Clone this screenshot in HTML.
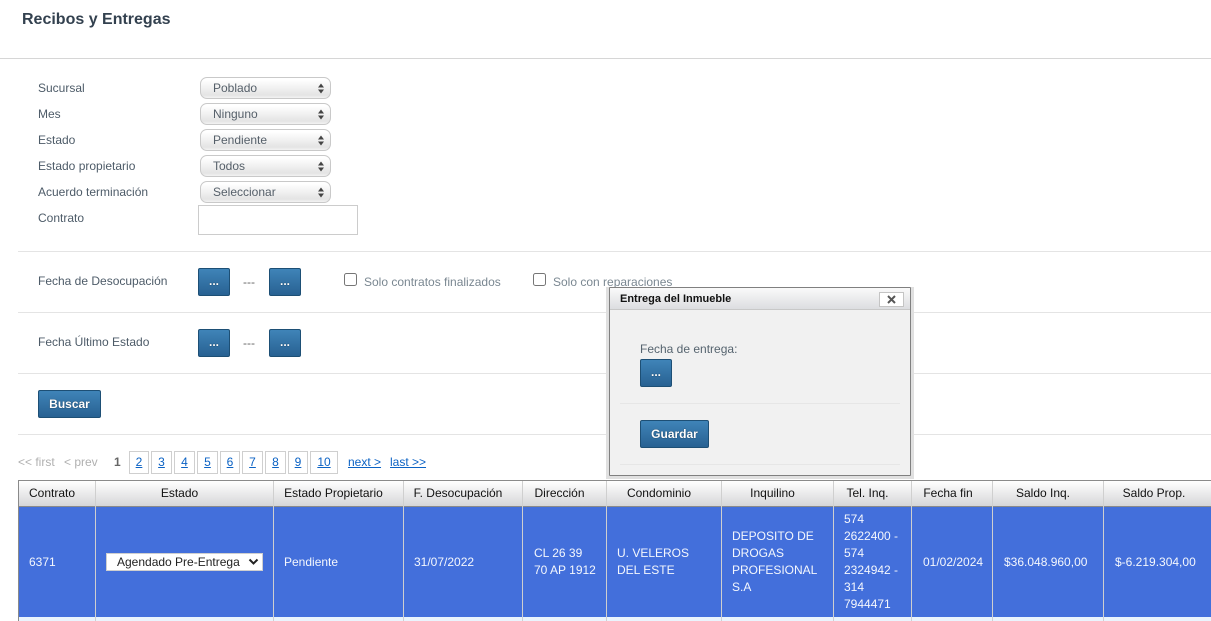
<!DOCTYPE html>
<html lang="es"><head><meta charset="utf-8"><title>Recibos y Entregas</title>
<style>
html,body{margin:0;padding:0;background:#fff;}
body{width:1211px;height:621px;overflow:hidden;position:relative;font:12px/17px "Liberation Sans",Arial,sans-serif;color:#4d5b68;}
.a{position:absolute;white-space:nowrap;}
.hr{position:absolute;height:1px;background:#e4e4e4;right:0;left:18px;}
.lbl{position:absolute;left:38px;line-height:16px;white-space:nowrap;color:#4d5b68;}
.sel{position:absolute;left:200px;width:129px;height:20px;border:1px solid #c9c9c9;border-radius:7px;background:linear-gradient(#ffffff 10%,#e4e4e4 85%,#f2f2f2);line-height:21px;text-indent:12px;color:#555f69;}
.sel svg{position:absolute;right:5px;top:5px;}
.btn{position:absolute;box-sizing:border-box;border:1px solid #1d4f75;border-radius:2px;background:linear-gradient(#3f84b8,#286192);color:#fff;font-weight:bold;text-align:center;text-shadow:0 0 1px #123;}
.dots{width:32px;height:28px;line-height:24px;font-size:12px;}
.dash{position:absolute;left:243px;color:#666;}
.cb{position:absolute;box-sizing:border-box;width:13px;height:13px;border:1px solid #767676;border-radius:2.5px;background:#fff;}
.pg{position:absolute;top:451px;height:23px;box-sizing:border-box;border:1px solid #cfcfcf;text-align:center;line-height:21px;color:#0b62c4;text-decoration:underline;}
.ln{position:absolute;top:454px;color:#0b62c4;text-decoration:underline;white-space:nowrap;line-height:17px;}
.gr{position:absolute;top:454px;color:#b0b0b0;white-space:nowrap;line-height:17px;}
.th{position:absolute;top:481px;height:25px;line-height:24px;color:#111;text-align:center;white-space:nowrap;}
.td{position:absolute;color:#f4f7fd;white-space:nowrap;line-height:17px;}
.v{position:absolute;top:481px;width:1px;height:140px;background:#cfcfcf;}
</style></head>
<body>
<div class="a" style="left:22px;top:10px;font-size:16px;line-height:19px;font-weight:bold;color:#33414f;">Recibos y Entregas</div>
<div class="hr" style="left:0;top:58px;background:#d6d6d6;"></div>

<div class="lbl" style="top:80px;">Sucursal</div>
<div class="lbl" style="top:106px;">Mes</div>
<div class="lbl" style="top:132px;">Estado</div>
<div class="lbl" style="top:158px;">Estado propietario</div>
<div class="lbl" style="top:184px;">Acuerdo terminación</div>
<div class="lbl" style="top:210px;">Contrato</div>

<div class="sel" style="top:77px;">Poblado<svg width="8" height="11" viewBox="0 0 8 11"><path d="M4 0.5L7 4.5H1ZM1 6.5H7L4 10.5Z" fill="#444"/></svg></div>
<div class="sel" style="top:103px;">Ninguno<svg width="8" height="11" viewBox="0 0 8 11"><path d="M4 0.5L7 4.5H1ZM1 6.5H7L4 10.5Z" fill="#444"/></svg></div>
<div class="sel" style="top:129px;">Pendiente<svg width="8" height="11" viewBox="0 0 8 11"><path d="M4 0.5L7 4.5H1ZM1 6.5H7L4 10.5Z" fill="#444"/></svg></div>
<div class="sel" style="top:155px;">Todos<svg width="8" height="11" viewBox="0 0 8 11"><path d="M4 0.5L7 4.5H1ZM1 6.5H7L4 10.5Z" fill="#444"/></svg></div>
<div class="sel" style="top:181px;">Seleccionar<svg width="8" height="11" viewBox="0 0 8 11"><path d="M4 0.5L7 4.5H1ZM1 6.5H7L4 10.5Z" fill="#444"/></svg></div>
<div class="a" style="left:198px;top:205px;width:158px;height:28px;border:1px solid #cccccc;background:#fff;"></div>

<div class="hr" style="top:251px;"></div>
<div class="lbl" style="top:273px;">Fecha de Desocupación</div>
<div class="btn dots" style="left:198px;top:268px;">...</div>
<div class="dash" style="top:274px;">---</div>
<div class="btn dots" style="left:269px;top:268px;">...</div>
<div class="cb" style="left:344px;top:273px;"></div>
<div class="a" style="left:364px;top:274px;color:#7a8791;">Solo contratos finalizados</div>
<div class="cb" style="left:533px;top:273px;"></div>
<div class="a" style="left:553px;top:274px;color:#7a8791;">Solo con reparaciones</div>

<div class="hr" style="top:312px;"></div>
<div class="lbl" style="top:334px;">Fecha Último Estado</div>
<div class="btn dots" style="left:198px;top:329px;">...</div>
<div class="dash" style="top:335px;">---</div>
<div class="btn dots" style="left:269px;top:329px;">...</div>

<div class="hr" style="top:373px;"></div>
<div class="btn" style="left:38px;top:390px;width:63px;height:28px;line-height:26px;">Buscar</div>
<div class="hr" style="top:434px;"></div>

<div class="gr" style="left:18px;">&lt;&lt; first</div>
<div class="gr" style="left:64px;">&lt; prev</div>
<div class="a" style="left:114px;top:454px;font-weight:bold;color:#666;">1</div>
<div class="pg" style="left:129px;width:20px;">2</div>
<div class="pg" style="left:151px;width:21px;">3</div>
<div class="pg" style="left:174px;width:21px;">4</div>
<div class="pg" style="left:197px;width:21px;">5</div>
<div class="pg" style="left:220px;width:20px;">6</div>
<div class="pg" style="left:242px;width:21px;">7</div>
<div class="pg" style="left:265px;width:21px;">8</div>
<div class="pg" style="left:288px;width:20px;">9</div>
<div class="pg" style="left:310px;width:28px;">10</div>
<div class="ln" style="left:348px;">next &gt;</div>
<div class="ln" style="left:390px;">last &gt;&gt;</div>

<!-- table -->
<div class="a" style="left:18px;top:480px;right:0;height:1px;background:#8a8a8a;"></div>
<div class="a" style="left:18px;top:480px;width:1px;height:141px;background:#8a8a8a;"></div>
<div class="a" style="left:19px;top:481px;right:0;height:25px;background:linear-gradient(#ffffff,#d6d6d8);"></div>
<div class="a" style="left:19px;top:506px;right:0;height:1px;background:#8a8a8a;"></div>
<div class="a" style="left:19px;top:507px;right:0;height:110px;background:#436fdb;"></div>
<div class="a" style="left:19px;top:617px;right:0;height:4px;background:#eaf4fd;"></div>

<div class="v" style="left:95px;"></div><div class="v" style="left:273px;"></div><div class="v" style="left:403px;"></div><div class="v" style="left:522px;"></div><div class="v" style="left:606px;"></div><div class="v" style="left:721px;"></div><div class="v" style="left:833px;"></div><div class="v" style="left:911px;"></div><div class="v" style="left:992px;"></div><div class="v" style="left:1103px;"></div>

<div class="th" style="left:19px;width:66px;">Contrato</div>
<div class="th" style="left:96px;width:167px;">Estado</div>
<div class="th" style="left:274px;width:119px;">Estado Propietario</div>
<div class="th" style="left:404px;width:108px;">F. Desocupación</div>
<div class="th" style="left:523px;width:73px;">Dirección</div>
<div class="th" style="left:607px;width:104px;">Condominio</div>
<div class="th" style="left:722px;width:101px;">Inquilino</div>
<div class="th" style="left:834px;width:67px;">Tel. Inq.</div>
<div class="th" style="left:913px;width:70px;">Fecha fin</div>
<div class="th" style="left:993px;width:100px;">Saldo Inq.</div>
<div class="th" style="left:1104px;width:100px;">Saldo Prop.</div>

<div class="td" style="left:29px;top:554px;">6371</div>
<div class="a" style="left:106px;top:553px;width:157px;height:18px;box-sizing:border-box;background:#fff;border:1px solid #cfcfcf;color:#222;line-height:17px;padding-left:10px;">Agendado Pre-Entrega<svg style="position:absolute;right:3px;top:4px;" width="11" height="8" viewBox="0 0 11 8"><path d="M1.5 1.5L5.5 5.5L9.5 1.5" fill="none" stroke="#222" stroke-width="2"/></svg></div>
<div class="td" style="left:284px;top:554px;">Pendiente</div>
<div class="td" style="left:414px;top:554px;">31/07/2022</div>
<div class="td" style="left:534px;top:545px;">CL 26 39<br>70 AP 1912</div>
<div class="td" style="left:617px;top:545px;">U. VELEROS<br>DEL ESTE</div>
<div class="td" style="left:732px;top:528px;">DEPOSITO DE<br>DROGAS<br>PROFESIONAL<br>S.A</div>
<div class="td" style="left:844px;top:511px;">574<br>2622400 -<br>574<br>2324942 -<br>314<br>7944471</div>
<div class="td" style="left:923px;top:554px;">01/02/2024</div>
<div class="td" style="left:1004px;top:554px;">$36.048.960,00</div>
<div class="td" style="left:1115px;top:554px;">$-6.219.304,00</div>

<!-- dialog -->
<div class="a" style="left:606px;top:287px;width:308px;height:192px;background:#e0e0e0;"></div>
<div class="a" style="left:609px;top:287px;width:300px;height:187px;border:1px solid #808080;background:#f1f1f1;border-radius:1px;">
  <div class="a" style="left:0;top:0;right:0;height:21px;background:linear-gradient(#fafafa,#dcdde0);border-bottom:1px solid #c8c8c8;"></div>
  <div class="a" style="left:10px;top:3px;font-size:11px;line-height:17px;font-weight:bold;color:#111;">Entrega del Inmueble</div>
  <div class="a" style="left:269px;top:4px;width:23px;height:13px;background:#fff;border:1px solid #c4c4c4;">
    <svg style="position:absolute;left:7px;top:2px;" width="9" height="9" viewBox="0 0 9 9"><path d="M1 1L8 8M8 1L1 8" stroke="#555" stroke-width="2"/></svg>
  </div>
  <div class="a" style="left:30px;top:53px;color:#56646f;">Fecha de entrega:</div>
  <div class="btn dots" style="left:30px;top:71px;">...</div>
  <div class="a" style="left:10px;top:115px;width:280px;height:1px;background:#e6e6e6;"></div>
  <div class="btn" style="left:30px;top:132px;width:69px;height:28px;line-height:26px;">Guardar</div>
  <div class="a" style="left:10px;top:176px;width:280px;height:1px;background:#e6e6e6;"></div>
</div>
</body></html>
